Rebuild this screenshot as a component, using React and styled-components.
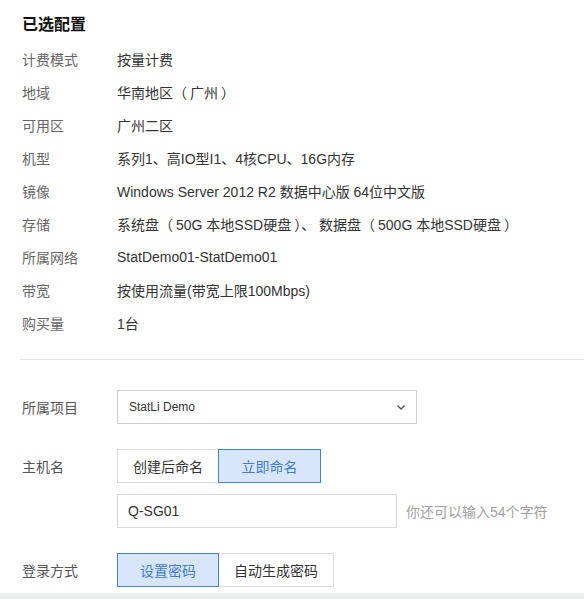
import React from "react";
import styled, { createGlobalStyle } from "styled-components";

const Global = createGlobalStyle`
  html, body { margin: 0; padding: 0; background: #fff; }
  body { font-family: "Liberation Sans", "Noto Sans CJK SC", sans-serif; }
`;

const Page = styled.div`
  width: 584px;
  height: 599px;
  box-sizing: border-box;
  display: flex;
  flex-direction: column;
  overflow: hidden;
  position: relative;
`;

const Summary = styled.section`
  padding: 14px 0 0 22px;
`;

const Title = styled.h3`
  margin: 0 0 6px;
  font-size: 16px;
  line-height: 22px;
  font-weight: bold;
  color: #111;
`;

const InfoRow = styled.div`
  display: flex;
  height: 33px;
  align-items: center;
  font-size: 14px;
  color: #333;
`;

const InfoLabel = styled.span`
  width: 95px;
  flex: none;
  color: #666;
`;

const InfoValue = styled.span`
  color: #333;
  white-space: nowrap;
`;

const Paren = styled.span`
  margin-left: ${(p) => (p.$open ? "0" : "3px")};
  margin-right: ${(p) => (p.$open ? "3px" : "0")};
`;

const Divider = styled.hr`
  border: none;
  border-top: 1px solid #e6e6e6;
  margin: 20px 0 0 20px;
  height: 0;
`;

const Form = styled.section`
  padding: 30px 0 0 22px;
  display: flex;
  flex-direction: column;
`;

const FormRow = styled.div`
  display: flex;
  align-items: center;
  margin-top: ${(p) => p.$gap || 0}px;
  font-size: 14px;
`;

const FormLabel = styled.span`
  width: 95px;
  flex: none;
  color: #555;
`;

const Select = styled.div`
  width: 300px;
  height: 34px;
  box-sizing: border-box;
  border: 1px solid #cfcfcf;
  display: flex;
  align-items: center;
  justify-content: space-between;
  padding: 0 10px 0 11px;
  font-size: 12px;
  color: #333;
`;

const Segment = styled.div`
  display: flex;
`;

const SegButton = styled.div`
  height: 34px;
  box-sizing: border-box;
  width: ${(p) => p.$w}px;
  display: flex;
  align-items: center;
  justify-content: center;
  font-size: 14px;
  border: 1px solid ${(p) => (p.$active ? "#4a80d3" : "#dcdcdc")};
  background: ${(p) => (p.$active ? "#d7e6fb" : "#fff")};
  color: ${(p) => (p.$active ? "#3f7bd4" : "#333")};
  margin-left: ${(p) => (p.$first ? 0 : -1)}px;
  position: relative;
  z-index: ${(p) => (p.$active ? 1 : 0)};
`;

const Input = styled.div`
  width: 280px;
  height: 34px;
  box-sizing: border-box;
  border: 1px solid #d9d9d9;
  display: flex;
  align-items: center;
  padding-left: 10px;
  font-size: 14px;
  color: #333;
`;

const Hint = styled.span`
  margin-left: 9px;
  font-size: 14px;
  color: #a0a0a0;
`;

const Indent = styled.div`
  width: 95px;
  flex: none;
`;

const BottomBar = styled.div`
  position: absolute;
  left: 0;
  right: 0;
  bottom: 0;
  height: 6px;
  background: linear-gradient(#f0f1f2, #e9ebec);
`;

const Chevron = () => (
  <svg width="10" height="7" viewBox="0 0 10 7">
    <path d="M1.5 1.5 L5 5 L8.5 1.5" fill="none" stroke="#555" strokeWidth="1.3" />
  </svg>
);

const P = ({ children }) => {
  const parts = children.split(/([（）])/);
  return parts.map((s, i) =>
    s === "（" ? (
      <Paren key={i} $open>（</Paren>
    ) : s === "）" ? (
      <Paren key={i}>）</Paren>
    ) : (
      s
    )
  );
};

const info = [
  ["计费模式", "按量计费"],
  ["地域", "华南地区（广州）"],
  ["可用区", "广州二区"],
  ["机型", "系列1、高IO型I1、4核CPU、16G内存"],
  ["镜像", "Windows Server 2012 R2 数据中心版 64位中文版"],
  ["存储", "系统盘（50G 本地SSD硬盘）、 数据盘（500G 本地SSD硬盘）"],
  ["所属网络", "StatDemo01-StatDemo01"],
  ["带宽", "按使用流量(带宽上限100Mbps)"],
  ["购买量", "1台"],
];

export default function App() {
  return (
    <Page>
      <Global />
      <Summary>
        <Title>已选配置</Title>
        {info.map(([k, v]) => (
          <InfoRow key={k}>
            <InfoLabel>{k}</InfoLabel>
            <InfoValue>
              <P>{v}</P>
            </InfoValue>
          </InfoRow>
        ))}
      </Summary>
      <Divider />
      <Form>
        <FormRow>
          <FormLabel>所属项目</FormLabel>
          <Select>
            <span>StatLi Demo</span>
            <Chevron />
          </Select>
        </FormRow>
        <FormRow $gap={25}>
          <FormLabel>主机名</FormLabel>
          <Segment>
            <SegButton $first $w={102}>创建后命名</SegButton>
            <SegButton $active $w={103}>立即命名</SegButton>
          </Segment>
        </FormRow>
        <FormRow $gap={11}>
          <Indent />
          <Input>Q-SG01</Input>
          <Hint>你还可以输入54个字符</Hint>
        </FormRow>
        <FormRow $gap={25}>
          <FormLabel>登录方式</FormLabel>
          <Segment>
            <SegButton $first $active $w={102}>设置密码</SegButton>
            <SegButton $w={116}>自动生成密码</SegButton>
          </Segment>
        </FormRow>
      </Form>
      <BottomBar />
    </Page>
  );
}
